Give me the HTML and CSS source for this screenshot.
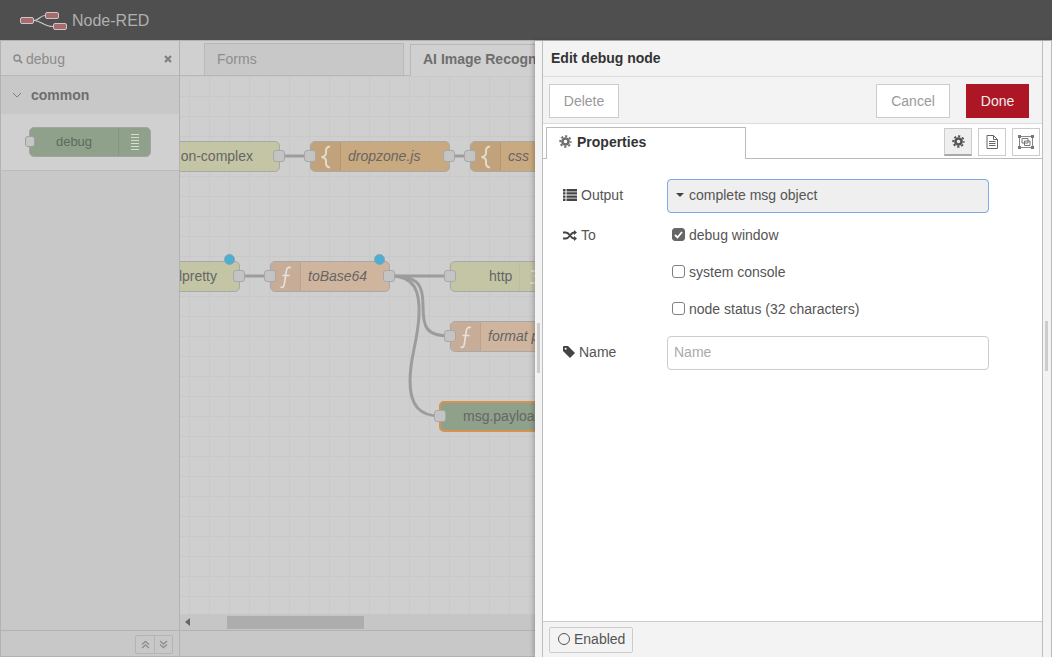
FILE: index.html
```html
<!DOCTYPE html>
<html lang="en">

<head>
    <meta charset="UTF-8">
    <meta name="viewport" content="width=device-width, initial-scale=1.0">
    <title>Node-RED</title>
    <link rel="stylesheet" href="styles.css">
</head>

<body>
    <div class="header">
        <svg class="logo" width="48" height="20" viewBox="0 0 48 20">
            <path d="M14 8.5 C19 8.5 20 3.5 25 3.5 M14 8.5 C21 8.5 24 14.5 33 14.5" fill="none" stroke="#c9c9c9" stroke-width="1.2" />
            <rect x="0.5" y="5.5" width="13" height="6" rx="1.5" fill="#a86a6a" stroke="#c9c9c9" />
            <rect x="25.5" y="0.5" width="13" height="6" rx="1.5" fill="#a86a6a" stroke="#c9c9c9" />
            <rect x="33.5" y="11.5" width="13" height="6" rx="1.5" fill="#a86a6a" stroke="#c9c9c9" />
        </svg>
        <span class="brand">Node-RED</span>
    </div>

    <div class="main">
        <div class="palette">
            <div class="palette-search">
                <svg width="10" height="10" viewBox="0 0 10 10">
                    <circle cx="4" cy="4" r="3" fill="none" stroke="#8a8a8a" stroke-width="1.4" />
                    <path d="M6.2 6.2 L9.2 9.2" stroke="#8a8a8a" stroke-width="1.8" />
                </svg>
                <span class="search-text">debug</span>
                <svg width="8" height="8" viewBox="0 0 8 8">
                    <path d="M1 1 L7 7 M7 1 L1 7" stroke="#808080" stroke-width="2.2" />
                </svg>
            </div>
            <div class="category">
                <svg width="10" height="6" viewBox="0 0 10 6">
                    <path d="M1 1 L5 5 L9 1" fill="none" stroke="#7c7c7c" stroke-width="1" />
                </svg>
                <span>common</span>
            </div>
            <div class="category-body">
                <div class="palette-node">
                    <span class="palette-port"></span>
                    <span class="palette-label">debug</span>
                    <span class="palette-icon">
                        <svg width="10" height="18" viewBox="0 0 10 18">
                            <path d="M1 1.5 H9 M1 4.5 H9 M1 7.5 H9 M1 10.5 H9 M1 13.5 H9 M1 16.5 H9" stroke="#d8ddd4" stroke-width="1.2" />
                        </svg>
                    </span>
                </div>
            </div>
            <div class="palette-fill"></div>
            <div class="palette-foot">
                <div class="foot-buttons">
                    <span class="foot-btn">
                        <svg width="9" height="9" viewBox="0 0 9 9">
                            <path d="M1 4.5 L4.5 1.5 L8 4.5 M1 8 L4.5 5 L8 8" fill="none" stroke="#8f8f8f" stroke-width="1.4" />
                        </svg>
                    </span>
                    <span class="foot-btn">
                        <svg width="9" height="9" viewBox="0 0 9 9">
                            <path d="M1 1 L4.5 4 L8 1 M1 4.5 L4.5 7.5 L8 4.5" fill="none" stroke="#8f8f8f" stroke-width="1.4" />
                        </svg>
                    </span>
                </div>
            </div>
        </div>

        <div class="workspace">
            <div class="tabs">
                <div class="tab">Forms</div>
                <div class="tab tab-active">AI Image Recogn</div>
            </div>
            <div class="canvas">
                <svg class="wires" width="355" height="538" viewBox="0 0 355 538">
                    <g fill="none" stroke="#9c9c9c" stroke-width="3">
                        <path d="M100 80 H130" />
                        <path d="M270 80 H290" />
                        <path d="M60 200 H90" />
                        <path d="M210 200 H270" />
                        <path d="M210 200 C240 200 243 210 243 230 C243 250 245 260 270 260" />
                        <path d="M210 200 C235 200 240 215 239 240 C237 270 230 280 230 305 C230 330 240 340 260 340" />
                    </g>
                </svg>

                <div class="node node-lime node-oncomplex">
                    <span class="node-text text-end">on-complex</span>
                    <span class="port port-right"></span>
                </div>
                <div class="node node-orange node-dropzone">
                    <span class="port port-left"></span>
                    <span class="node-icon">
                        <svg width="14" height="24" viewBox="0 0 14 24">
                            <path d="M11 1.5 C6.5 2 7 5 7 8 C7 10.5 6 11.5 2.5 12 C6 12.5 7 13.5 7 16 C7 19 6.5 22 11 22.5" fill="none" stroke="#e4dccb" stroke-width="2" />
                        </svg>
                    </span>
                    <span class="node-text text-italic">dropzone.js</span>
                    <span class="port port-right"></span>
                </div>
                <div class="node node-orange node-css">
                    <span class="port port-left"></span>
                    <span class="node-icon">
                        <svg width="14" height="24" viewBox="0 0 14 24">
                            <path d="M11 1.5 C6.5 2 7 5 7 8 C7 10.5 6 11.5 2.5 12 C6 12.5 7 13.5 7 16 C7 19 6.5 22 11 22.5" fill="none" stroke="#e4dccb" stroke-width="2" />
                        </svg>
                    </span>
                    <span class="node-text text-italic">css</span>
                </div>
                <div class="node node-lime node-pretty">
                    <span class="node-text text-end">lpretty</span>
                    <span class="port port-right"></span>
                    <span class="status-dot"></span>
                </div>
                <div class="node node-tan node-base64">
                    <span class="port port-left"></span>
                    <span class="node-icon">
                        <svg width="14" height="24" viewBox="0 0 14 24">
                            <path d="M12 2.5 C8 1.5 7.5 4 7 8 L5.5 18 C5 22 4 23 1.5 22 M3.5 10.5 H10.5" fill="none" stroke="#e6e1da" stroke-width="1.7" />
                        </svg>
                    </span>
                    <span class="node-text text-italic">toBase64</span>
                    <span class="port port-right"></span>
                    <span class="status-dot"></span>
                </div>
                <div class="node node-lime node-http">
                    <span class="port port-left"></span>
                    <span class="node-text http-text">http</span>
                    <span class="http-icon">
                        <svg width="14" height="16" viewBox="0 0 14 16">
                            <path d="M3 2 H10 L7 7 C11 7 11 14 5 14 H2" fill="none" stroke="#dcdcc6" stroke-width="2" />
                        </svg>
                    </span>
                </div>
                <div class="node node-tan node-format">
                    <span class="port port-left"></span>
                    <span class="node-icon">
                        <svg width="14" height="24" viewBox="0 0 14 24">
                            <path d="M12 2.5 C8 1.5 7.5 4 7 8 L5.5 18 C5 22 4 23 1.5 22 M3.5 10.5 H10.5" fill="none" stroke="#e6e1da" stroke-width="1.7" />
                        </svg>
                    </span>
                    <span class="node-text text-italic">format p</span>
                </div>
                <div class="node node-debug node-payload">
                    <span class="port port-left"></span>
                    <span class="node-text payload-text">msg.payload</span>
                </div>
            </div>
            <div class="scrollbar">
                <span class="scroll-arrow"></span>
                <span class="scroll-thumb"></span>
            </div>
            <div class="workspace-foot"></div>
        </div>
    </div>

    <div class="tray">
        <div class="tray-edge"><span class="grip"></span></div>
        <div class="tray-panel">
            <div class="tray-title">Edit debug node</div>
            <div class="tray-toolbar">
                <button class="btn">Delete</button>
                <span class="spacer"></span>
                <button class="btn btn-cancel">Cancel</button>
                <button class="btn btn-done">Done</button>
            </div>
            <div class="tray-tabs">
                <div class="prop-tab">
                    <svg class="gear" width="13" height="13" viewBox="0 0 14 14">
                        <circle cx="7" cy="7" r="5.7" fill="none" stroke="#6f6f6f" stroke-width="2" stroke-dasharray="2.4 2.08" stroke-dashoffset="1.2" />
                        <circle cx="7" cy="7" r="3.3" fill="none" stroke="#6f6f6f" stroke-width="2.8" />
                    </svg>
                    Properties
                </div>
                <span class="spacer"></span>
                <div class="icon-tabs">
                    <span class="icon-tab icon-tab-on">
                        <svg width="13" height="13" viewBox="0 0 14 14">
                            <circle cx="7" cy="7" r="5.7" fill="none" stroke="#555" stroke-width="2" stroke-dasharray="2.4 2.08" stroke-dashoffset="1.2" />
                            <circle cx="7" cy="7" r="3.3" fill="none" stroke="#555" stroke-width="2.8" />
                        </svg>
                    </span>
                    <span class="icon-tab">
                        <svg width="12" height="14" viewBox="0 0 12 14">
                            <path d="M1 .5 H7.5 L11.5 4.5 V13.5 H1 Z M7.5 .5 V4.5 H11.5 M3 6.5 H9.5 M3 8.5 H9.5 M3 10.5 H9.5" fill="none" stroke="#666" />
                        </svg>
                    </span>
                    <span class="icon-tab">
                        <svg width="16" height="14" viewBox="0 0 16 14">
                            <path d="M1.5 1.5 H14.5 V12.5 H1.5 Z" fill="none" stroke="#888" />
                            <path d="M4 3.5 H10 V8 H4 Z M6.5 6 H12 V10.5 H6.5 Z" fill="none" stroke="#777" />
                            <path d="M0 0 H3 V3 H0 Z M13 0 H16 V3 H13 Z M0 11 H3 V14 H0 Z M13 11 H16 V14 H13 Z" fill="#777" />
                        </svg>
                    </span>
                </div>
            </div>
            <div class="tray-form">
                <div class="form-row row-output">
                    <label class="form-label">
                        <svg width="14" height="12" viewBox="0 0 14 12">
                            <path d="M0 0 H2.5 V2.4 H0 Z M3.5 0 H14 V2.4 H3.5 Z M0 3.2 H2.5 V5.6 H0 Z M3.5 3.2 H14 V5.6 H3.5 Z M0 6.4 H2.5 V8.8 H0 Z M3.5 6.4 H14 V8.8 H3.5 Z M0 9.6 H2.5 V12 H0 Z M3.5 9.6 H14 V12 H3.5 Z" fill="#444" />
                        </svg>
                        Output
                    </label>
                    <div class="type-select">
                        <span class="caret"></span>
                        complete msg object
                    </div>
                </div>
                <div class="form-row row-to">
                    <label class="form-label">
                        <svg width="14" height="11" viewBox="0 0 14 11">
                            <path d="M0 2.5 H3 C6.5 2.5 7.5 8.5 11 8.5 H12 M0 8.5 H3 C6.5 8.5 7.5 2.5 11 2.5 H12" fill="none" stroke="#444" stroke-width="2" />
                            <path d="M11 0 L14 2.5 L11 5 Z M11 6 L14 8.5 L11 11 Z" fill="#444" />
                        </svg>
                        To
                    </label>
                    <div class="checks">
                        <div class="check-row">
                            <span class="check check-on">
                                <svg width="9" height="8" viewBox="0 0 9 8">
                                    <path d="M1 4 L3.5 6.5 L8 1" fill="none" stroke="#fff" stroke-width="1.8" />
                                </svg>
                            </span>
                            debug window
                        </div>
                        <div class="check-row"><span class="check"></span>system console</div>
                        <div class="check-row"><span class="check"></span>node status (32 characters)</div>
                    </div>
                </div>
                <div class="form-row row-name">
                    <label class="form-label label-name">
                        <svg width="12" height="12" viewBox="0 0 12 12">
                            <path d="M0 1 Q0 0 1 0 H5 L12 7 L7 12 L0 5 Z" fill="#444" />
                            <circle cx="2.7" cy="2.7" r="1" fill="#fff" />
                        </svg>
                        Name
                    </label>
                    <div class="text-input">Name</div>
                </div>
            </div>
            <div class="tray-foot">
                <button class="btn-enabled"><span class="ring"></span>Enabled</button>
            </div>
        </div>
        <div class="tray-side"><span class="grip"></span></div>
    </div>
</body>

</html>
```

FILE: styles.css
```css
* {
    margin: 0;
    padding: 0;
    box-sizing: border-box;
}

body {
    width: 1052px;
    height: 657px;
    overflow: hidden;
    position: relative;
    font-family: "Liberation Sans", Arial, sans-serif;
    font-size: 14px;
    color: #555;
    background: #cfcfcf;
}

/* header */

.header {
    display: flex;
    align-items: center;
    height: 40px;
    padding: 2px 0 0 20px;
    background: #4f4f4f;
}

.logo {
    margin-top: 2px;
}

.brand {
    margin-left: 4px;
    font-size: 16px;
    color: #b0b0b0;
}

.main {
    display: flex;
    height: 617px;
    border-top: 1px solid #b2b2b2;
    border-bottom: 1px solid #b2b2b2;
}

/* palette */

.palette {
    display: flex;
    flex-direction: column;
    width: 180px;
    border-left: 1px solid #b2b2b2;
    border-right: 1px solid #b2b2b2;
    background: #c8c8c8;
}

.palette-search {
    display: flex;
    align-items: center;
    height: 35px;
    padding: 2px 7px 0 12px;
    border-bottom: 1px solid #b8b8b8;
    background: #d0d0d0;
    color: #8c8c8c;
}

.search-text {
    flex: 1;
    margin-left: 3px;
}

.category {
    display: flex;
    align-items: center;
    gap: 9px;
    height: 38px;
    padding-left: 11px;
    background: #c8c8c8;
    font-weight: bold;
    color: #6e6e6e;
}

.category-body {
    height: 57px;
    padding: 13px 0 0 28px;
    border-bottom: 1px solid #bcbcbc;
    background: #d0d0d0;
}

.palette-node {
    display: flex;
    position: relative;
    width: 122px;
    height: 30px;
    border: 1px solid #a3a3a3;
    border-radius: 5px;
    background: #8fa18a;
}

.palette-port {
    position: absolute;
    left: -5px;
    top: 8px;
    width: 10px;
    height: 11px;
    border: 1px solid #a0a0a0;
    border-radius: 3px;
    background: #c6c6c6;
}

.palette-label {
    flex: 1;
    line-height: 28px;
    text-align: center;
    font-size: 13px;
    color: #5f6a5c;
}

.palette-icon {
    display: flex;
    align-items: center;
    justify-content: center;
    width: 32px;
    border-left: 1px solid #83957e;
}

.palette-fill {
    flex: 1;
}

.palette-foot {
    display: flex;
    justify-content: flex-end;
    height: 26px;
    padding: 4px 6px 0 0;
    border-top: 1px solid #b2b2b2;
}

.foot-buttons {
    display: flex;
    height: 19px;
    border: 1px solid #b4b4b4;
    border-radius: 2px;
}

.foot-btn {
    display: flex;
    align-items: center;
    justify-content: center;
    width: 18px;
}

.foot-btn + .foot-btn {
    border-left: 1px solid #b4b4b4;
}

/* workspace */

.workspace {
    display: flex;
    flex-direction: column;
    flex: 1;
    min-width: 0;
}

.tabs {
    display: flex;
    align-items: flex-end;
    gap: 6px;
    height: 35px;
    padding-left: 24px;
    border-bottom: 1px solid #b8b8b8;
    background: #d0d0d0;
}

.tab {
    flex: none;
    width: 200px;
    height: 32px;
    padding-left: 12px;
    line-height: 31px;
    border: 1px solid #b8b8b8;
    border-bottom: none;
    background: #c8c8c8;
    color: #8e8e8e;
}

.tab-active {
    position: relative;
    top: 1px;
    padding-left: 12px;
    line-height: 29px;
    background: #d0d0d0;
    font-weight: bold;
    color: #6e6e6e;
}

.canvas {
    position: relative;
    flex: 1;
    overflow: hidden;
    background-color: #cfcfcf;
    background-image: linear-gradient(#c9c9c9 1px, transparent 1px), linear-gradient(90deg, #c9c9c9 1px, transparent 1px);
    background-size: 20px 20px;
    background-position: 9px 0;
}

.wires {
    position: absolute;
    left: 0;
    top: 0;
}

.node {
    display: flex;
    position: absolute;
    height: 31px;
    border: 1px solid #a8a8a8;
    border-radius: 5px;
    line-height: 28px;
    color: #666;
}

.node-lime {
    background: #c3c5a5;
}

.node-orange {
    background: #c9a97f;
}

.node-tan {
    background: #d0b59e;
}

.node-debug {
    border: 2px solid #d5934f;
    background: #8fa18a;
}

.node-oncomplex {
    left: -60px;
    top: 65px;
    width: 160px;
}

.node-dropzone {
    left: 130px;
    top: 65px;
    width: 140px;
}

.node-css {
    left: 290px;
    top: 65px;
    width: 120px;
}

.node-pretty {
    left: -60px;
    top: 185px;
    width: 120px;
}

.node-base64 {
    left: 90px;
    top: 185px;
    width: 120px;
}

.node-http {
    left: 270px;
    top: 185px;
    width: 140px;
}

.node-format {
    left: 270px;
    top: 245px;
    width: 160px;
}

.node-payload {
    left: 259px;
    top: 325px;
    width: 160px;
    line-height: 27px;
}

.node-icon {
    display: flex;
    align-items: center;
    justify-content: center;
    flex: none;
    width: 30px;
    border-right: 1px solid rgba(0, 0, 0, 0.06);
    border-radius: 5px 0 0 5px;
    background: rgba(0, 0, 0, 0.04);
}

.node-text {
    flex: 1;
    white-space: nowrap;
    padding-left: 7px;
}

.text-italic {
    font-style: italic;
}

.text-end {
    padding: 0 26px 0 0;
    text-align: right;
}

.node-pretty .text-end {
    padding-right: 22px;
}

.http-text {
    padding-left: 38px;
}

.http-icon {
    display: flex;
    align-items: center;
    justify-content: center;
    width: 70px;
    border-left: 1px solid #bcbfa0;
    padding-right: 40px;
}

.payload-text {
    padding-left: 22px;
}

.port {
    position: absolute;
    top: 8px;
    width: 12px;
    height: 12px;
    border: 1px solid #a8a8a8;
    border-radius: 3px;
    background: #c4c4c4;
}

.port-left {
    left: -7px;
}

.port-right {
    right: -6px;
}

.node-payload .port-left {
    top: 7px;
    left: -7px;
}

.status-dot {
    position: absolute;
    right: 4px;
    top: -8px;
    width: 11px;
    height: 11px;
    border: 1px solid #7fa9bb;
    border-radius: 50%;
    background: #4eadd1;
}

.scrollbar {
    position: relative;
    height: 16px;
    background: #c6c6c6;
}

.scroll-arrow {
    position: absolute;
    left: 5px;
    top: 4px;
    border-style: solid;
    border-width: 4px 5px 4px 0;
    border-color: transparent #666 transparent transparent;
}

.scroll-thumb {
    position: absolute;
    left: 47px;
    top: 2px;
    width: 137px;
    height: 13px;
    background: #adadad;
}

.workspace-foot {
    height: 26px;
    border-top: 1px solid #b2b2b2;
    background: #c8c8c8;
}

/* edit tray */

.tray {
    display: flex;
    position: absolute;
    left: 535px;
    top: 41px;
    right: 0;
    bottom: 0;
    background: #f3f3f3;
    box-shadow: -2px 0 4px rgba(0, 0, 0, 0.2);
}

.tray-edge {
    display: flex;
    align-items: center;
    flex: none;
    width: 7px;
    padding-left: 2px;
}

.tray-side {
    display: flex;
    align-items: center;
    flex: none;
    width: 9px;
    padding-left: 2px;
    border-right: 1px solid #b9b9b9;
}

.grip {
    display: block;
    width: 3px;
    height: 50px;
    margin-top: -2px;
    background: #cdcdcd;
}

.tray-side .grip {
    margin-top: -6px;
}

.tray-panel {
    display: flex;
    flex-direction: column;
    width: 502px;
    border-left: 1px solid #bdbdbd;
    border-right: 1px solid #bdbdbd;
    background: #fff;
}

.tray-title {
    height: 36px;
    padding-left: 8px;
    line-height: 34px;
    font-weight: bold;
    color: #333;
    background: #f3f3f3;
    border-bottom: 1px solid #dcdcdc;
}

.tray-toolbar {
    display: flex;
    align-items: flex-start;
    height: 47px;
    padding: 7px 13px 0 6px;
    background: #f3f3f3;
    border-bottom: 1px solid #dcdcdc;
}

.spacer {
    flex: 1;
}

.btn {
    width: 70px;
    height: 34px;
    border: 1px solid #ccc;
    background: #fff;
    font: 14px "Liberation Sans", Arial, sans-serif;
    color: #999;
}

.btn-cancel {
    width: 74px;
}

.btn-done {
    width: 63px;
    margin-left: 16px;
    border-color: #ad1625;
    background: #ad1625;
    color: #eee;
}

.tray-tabs {
    display: flex;
    height: 35px;
    padding: 3px 2px 0 3px;
    border-bottom: 1px solid #bbb;
}

.prop-tab {
    display: flex;
    align-items: center;
    gap: 5px;
    position: relative;
    width: 200px;
    height: 32px;
    padding: 0 0 4px 12px;
    border: 1px solid #bbb;
    border-bottom: none;
    background: #fff;
    font-weight: bold;
    color: #333;
}

.icon-tabs {
    display: flex;
    gap: 6px;
    padding-top: 1px;
}

.icon-tab {
    display: flex;
    align-items: center;
    justify-content: center;
    width: 28px;
    height: 28px;
    border: 1px solid #ccc;
    background: #fff;
}

.icon-tab-on {
    background: #efefef;
    border-bottom: 2px solid #a9a9a9;
}

.tray-form {
    flex: 1;
    padding: 20px 0 0 20px;
}

.form-row {
    display: flex;
}

.form-label {
    display: flex;
    align-items: center;
    gap: 4px;
    flex: none;
    width: 104px;
    height: 34px;
    padding-bottom: 2px;
    color: #555;
}

.type-select {
    display: flex;
    align-items: center;
    width: 322px;
    height: 34px;
    padding: 0 0 2px 8px;
    border: 1px solid #7fa8e4;
    border-radius: 4px;
    background: #efefef;
    color: #555;
}

.caret {
    margin-right: 5px;
    border-style: solid;
    border-width: 4px 4px 0 4px;
    border-color: #444 transparent transparent transparent;
}

.row-to {
    margin-top: 5px;
}

.row-to .form-label {
    padding-bottom: 0;
}

.checks {
    display: flex;
    flex-direction: column;
    gap: 20px;
    padding: 8px 0 0 5px;
}

.check-row {
    display: flex;
    align-items: center;
    gap: 4px;
    height: 17px;
}

.check {
    display: flex;
    align-items: center;
    justify-content: center;
    width: 13px;
    height: 13px;
    border: 1px solid #808080;
    border-radius: 3px;
    background: #fff;
}

.check-on {
    border-color: #666;
    background: #666;
}

.row-name {
    margin-top: 19px;
}

.text-input {
    width: 322px;
    height: 34px;
    padding-left: 6px;
    line-height: 30px;
    border: 1px solid #ccc;
    border-radius: 4px;
    color: #aaa;
}

.tray-foot {
    height: 36px;
    padding: 5px 0 0 6px;
    border-top: 1px solid #ccc;
    background: #f3f3f3;
}

.btn-enabled {
    display: flex;
    align-items: center;
    gap: 4px;
    width: 84px;
    height: 26px;
    padding: 0 0 2px 8px;
    border: 1px solid #ccc;
    border-radius: 2px;
    background: #f3f3f3;
    font: 14px "Liberation Sans", Arial, sans-serif;
    color: #555;
}

.ring {
    width: 12px;
    height: 12px;
    border: 1px solid #555;
    border-radius: 50%;
}
```
